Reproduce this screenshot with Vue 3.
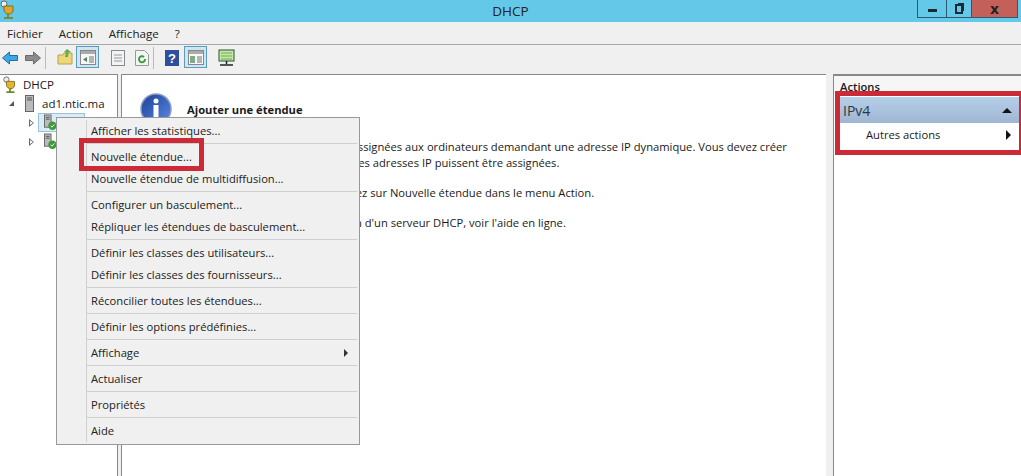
<script setup>
const menuGroups = [
  [{ t: 'Afficher les statistiques...' }],
  [{ t: 'Nouvelle étendue...', mark: true }, { t: 'Nouvelle étendue de multidiffusion...' }],
  [{ t: 'Configurer un basculement...' }, { t: 'Répliquer les étendues de basculement...' }],
  [{ t: 'Définir les classes des utilisateurs...' }, { t: 'Définir les classes des fournisseurs...' }],
  [{ t: 'Réconcilier toutes les étendues...' }],
  [{ t: 'Définir les options prédéfinies...' }],
  [{ t: 'Affichage', sub: true }],
  [{ t: 'Actualiser' }],
  [{ t: 'Propriétés' }],
  [{ t: 'Aide' }]
]
</script>

<template>
  <div class="win">
    <header class="title">
      <svg class="trophy" width="16" height="20" viewBox="0 0 16 20">
        <circle cx="4" cy="4" r="3" fill="#eee" stroke="#666" />
        <path d="M4 6h9v4c0 3-2 4-4 4s-5-1-5-4z" fill="#d9a92c" stroke="#8a6a1c" />
        <path d="M8 14v3M4 18h9" stroke="#7a8a40" stroke-width="2" />
      </svg>
      <span class="title-text">DHCP</span>
      <div class="winbtns">
        <div class="wb w1"><i class="min"></i></div>
        <div class="wb w2"><i class="max"></i></div>
        <div class="wb close">x</div>
      </div>
    </header>
    <nav class="menubar">
      <span>Fichier</span><span>Action</span><span>Affichage</span><span>?</span>
    </nav>
    <div class="toolbar">
      <svg width="16" height="14" viewBox="0 0 16 14" class="t-back"><path d="M.5 7l7-6v3.500h8v5h-8V13z" fill="#3fa8e2" stroke="#1f6e9e" /></svg>
      <svg width="16" height="14" viewBox="0 0 16 14" class="t-fwd"><path d="M15.500 7l-7-6v3.500h-8v5h8V13z" fill="#8c8c8c" stroke="#6a6a6a" /></svg>
      <i class="sep s1"></i>
      <svg width="16" height="16" viewBox="0 0 16 16" class="t-up"><path d="M1 6h5l1-2h8v11H1z" fill="#ecd77a" stroke="#b8a050" /><path d="M10 0l4 3-2.500.5L11 8H8l1-4.500L7 3z" fill="#5fb04a" /></svg>
      <div class="tb-on t-panel"><svg width="16" height="15" viewBox="0 0 16 15"><rect x=".5" y=".5" width="15" height="14" fill="#f8f8f8" stroke="#888" /><rect x="1" y="1" width="14" height="3" fill="#aaa" /><path d="M9 6h5v7H9z" fill="#b5b5b5" /><path d="M7 7v5L3 9.500z" fill="#4a8a5a" /></svg></div>
      <svg width="16" height="16" viewBox="0 0 16 16" class="t-list"><rect x="1.500" y=".5" width="13" height="15" fill="#f4f4f4" stroke="#8a8a8a" /><path d="M4 5h8M4 8h8M4 11h8" stroke="#8a9aa0" /></svg>
      <svg width="14" height="16" viewBox="0 0 14 16" class="t-ref"><path d="M.5.5h9l4 4v11H.5z" fill="#f4f4f4" stroke="#999" /><path d="M10 9a3 3 0 1 1-1-2" fill="none" stroke="#3e9a3e" stroke-width="2" /></svg>
      <i class="sep s2"></i>
      <svg width="14" height="16" viewBox="0 0 14 16" class="t-help"><rect width="14" height="16" fill="#2e4f9c" /><text x="7" y="13" text-anchor="middle" class="help-q">?</text></svg>
      <div class="tb-on t-panel2"><svg width="16" height="15" viewBox="0 0 16 15"><rect x=".5" y=".5" width="15" height="14" fill="#f8f8f8" stroke="#888" /><rect x="1" y="1" width="14" height="3" fill="#aaa" /><path d="M2 6h5v7H2z" fill="#4a8a5a" opacity=".7" /><path d="M9 6h5v7H9z" fill="#b5b5b5" /></svg></div>
      <svg width="17" height="18" viewBox="0 0 17 18" class="t-mon"><rect x="1" y="1" width="15" height="11" fill="#c9e8a8" stroke="#1e5a2a" /><path d="M3 4h11M3 7h11M3 10h11" stroke="#6aa85a" /><path d="M8.500 12v3M2 16h13" stroke="#222" stroke-width="1.500" /></svg>
    </div>
    <main class="body">
      <aside class="tree">
        <div class="node n0">
          <svg width="16" height="18" viewBox="0 0 16 20"><circle cx="4" cy="4" r="3" fill="#eee" stroke="#666" /><path d="M4 6h9v4c0 3-2 4-4 4s-5-1-5-4z" fill="#e2b62e" stroke="#8a6a1c" /><path d="M8 14v3M4 18h9" stroke="#6a8a30" stroke-width="2" /></svg>
          <span>DHCP</span>
        </div>
        <div class="node n1">
          <i class="tri-open"></i>
          <svg width="9" height="17" viewBox="0 0 9 17"><rect x=".5" y=".5" width="8" height="16" fill="#bbb" stroke="#666" /><path d="M2 3h5M2 5h5" stroke="#555" /></svg>
          <span>ad1.ntic.ma</span>
        </div>
        <div class="node n2">
          <i class="tri"></i>
          <div class="srv-box"><svg width="14" height="17" viewBox="0 0 14 17"><rect x=".5" y=".5" width="7" height="13" fill="#bbb" stroke="#666" /><path d="M2 3h4M2 5h4" stroke="#555" /><circle cx="9" cy="12" r="4.500" fill="#3c9a3c" /><path d="M7 12l1.500 1.500L11 10.500" stroke="#fff" fill="none" /></svg><span>IPv4</span></div>
        </div>
        <div class="node n2">
          <i class="tri"></i>
          <div class="srv-box plain"><svg width="14" height="17" viewBox="0 0 14 17"><rect x=".5" y=".5" width="7" height="13" fill="#bbb" stroke="#666" /><path d="M2 3h4M2 5h4" stroke="#555" /><circle cx="9" cy="12" r="4.500" fill="#3c9a3c" /><path d="M7 12l1.500 1.500L11 10.500" stroke="#fff" fill="none" /></svg><span>IPv6</span></div>
        </div>
      </aside>
      <section class="center">
        <div class="head">
          <svg width="32" height="32" viewBox="0 0 32 32" class="info">
            <defs>
              <linearGradient id="infoFill" x1="0" y1="0" x2="1" y2="1">
                <stop offset="0" stop-color="#1c3f9a" />
                <stop offset="1" stop-color="#5a8ce0" />
              </linearGradient>
            </defs>
            <circle cx="16" cy="16" r="15" fill="url(#infoFill)" stroke="#8a9ac0" stroke-width="1.500" />
            <circle cx="16" cy="8" r="2.500" fill="#fff" />
            <rect x="13.500" y="12" width="5" height="14" fill="#fff" />
          </svg>
          <h1>Ajouter une étendue</h1>
        </div>
        <div class="copy">
          <p>Des plages d'adresses IP y sont assignées aux ordinateurs demandant une adresse IP dynamique. Vous devez créer<br />et bâtir une étendue avant que des adresses IP puissent être assignées.</p>
          <p>Pour ajouter des étendues, cliquez sur Nouvelle étendue dans le menu Action.</p>
          <p>Pour les infos sur la configuration d'un serveur DHCP, voir l'aide en ligne.</p>
        </div>
      </section>
      <aside class="actions">
        <div class="act-head">Actions</div>
        <div class="act-mark">
          <div class="act-title"><span>IPv4</span><i class="up"></i></div>
          <div class="act-item"><span>Autres actions</span><i class="right"></i></div>
        </div>
      </aside>
    </main>
    <div class="ctx">
      <div v-for="(g, i) in menuGroups" :key="i" class="group">
        <div v-for="it in g" :key="it.t" class="item" :class="{ mark: it.mark }">
          <span>{{ it.t }}</span>
          <i v-if="it.sub" class="subarrow"></i>
        </div>
      </div>
    </div>
  </div>
</template>

<style scoped>
.win {
  width: 1021px;
  height: 476px;
  overflow: hidden;
  position: relative;
  background: #f0f0f0;
  font-family: "Open Sans", "Noto Sans", sans-serif;
  font-size: 11.2px;
  color: #1a1a1a;
  display: flex;
  flex-direction: column;
}
.title {
  height: 22px;
  background: #64c8e8;
  display: flex;
  justify-content: center;
  align-items: center;
  position: relative;
  flex: none;
}
.title-text { font-size: 13.500px; color: #222; }
.trophy { position: absolute; left: 0; top: 0; }
.winbtns {
  position: absolute;
  right: 3px;
  top: 0;
  display: flex;
  height: 18px;
}
.wb {
  box-sizing: border-box;
  border: 1px solid #2e5a70;
  border-top: 0;
  margin-left: -1px;
  display: flex;
  align-items: center;
  justify-content: center;
}
.w1 { width: 30px; }
.w2 { width: 26px; }
.wb.close {
  width: 47px;
  background: #c4605a;
  font: bold 14px "DejaVu Sans", sans-serif;
  line-height: 14px;
  color: #222;
}
.min { width: 9px; height: 3px; background: #1a2a30; margin-top: 4px; }
.max { width: 4px; height: 6px; border: 2px solid #1a2a30; box-shadow: 2px -2px 0 -1px #1a2a30; }
.menubar {
  height: 22px;
  flex: none;
  display: flex;
  align-items: center;
  gap: 16px;
  padding-left: 7px;
  border-bottom: 1px solid #a8a8a8;
  color: #222;
  font-size: 11.600px;
}
.toolbar {
  height: 28px;
  flex: none;
  position: relative;
}
.toolbar > * { position: absolute; }
.t-back { left: 2px; top: 6px; }
.t-fwd { left: 25px; top: 6px; }
.s1 { left: 45px; top: 2px; }
.t-up { left: 57px; top: 4px; }
.t-panel { left: 76px; top: 1px; }
.t-list { left: 110px; top: 5px; }
.t-ref { left: 135px; top: 5px; }
.s2 { left: 153px; top: 2px; }
.t-help { left: 165px; top: 5px; }
.t-panel2 { left: 184px; top: 1px; }
.t-mon { left: 218px; top: 4px; }
.sep { width: 1px; height: 22px; background: #bbb; }
.tb-on {
  width: 21px;
  height: 20px;
  background: #cde6f5;
  border: 1px solid #5a9cc0;
  display: flex;
  align-items: center;
  justify-content: center;
}
.help-q { font: bold 13px "Liberation Sans", sans-serif; fill: #fff; }
.body {
  flex: 1;
  display: flex;
  min-height: 0;
  padding-top: 1px;
}
.tree {
  width: 118px;
  box-sizing: border-box;
  background: #fff;
  border-top: 1px solid #888;
  border-right: 1px solid #888;
  flex: none;
}
.node {
  height: 19px;
  display: flex;
  align-items: center;
  gap: 5px;
  position: relative;
}
.n0 { padding-left: 2px; font-size: 11.500px; }
.n1 { padding-left: 9px; gap: 0; font-size: 11.500px; }
.n1 span { margin-left: 8px; }
.n2 { padding-left: 29px; gap: 4px; }
.tri-open {
  width: 0; height: 0;
  border-left: 5px solid transparent;
  border-bottom: 5px solid #555;
  margin-right: 11px;
}
.tri {
  width: 0; height: 0;
  border-top: 4px solid transparent;
  border-bottom: 4px solid transparent;
  border-left: 5px solid #666;
  position: relative;
}
.tri::after {
  content: "";
  position: absolute;
  left: -4px;
  top: -2px;
  border-top: 2px solid transparent;
  border-bottom: 2px solid transparent;
  border-left: 3px solid #fff;
}
.srv-box {
  width: 47px;
  height: 19px;
  box-sizing: border-box;
  background: #d8ecf8;
  border: 1px solid #9cc0d8;
  padding-left: 5px;
  display: flex;
  gap: 5px;
  line-height: 13px;
}
.srv-box.plain { background: none; border-color: transparent; }
.center {
  flex: 1;
  min-width: 0;
  overflow: hidden;
  margin-left: 3px;
  background: #fff;
  border-top: 1px solid #888;
  border-left: 1px solid #888;
  padding: 18px 0 0 18px;
}
.head { display: flex; align-items: flex-start; gap: 15px; }
.info { flex: none; }
h1 {
  margin: 0;
  margin-top: 9px;
  font-size: 11.200px;
  line-height: 16px;
  font-weight: 700;
}
.copy { margin: 14px 0 0 47px; line-height: 16px; white-space: nowrap; }
.copy p { margin: 0 0 14px; }
.actions {
  width: 188px;
  box-sizing: border-box;
  margin-left: 7px;
  flex: none;
  background: #fff;
  border-top: 2px solid #888;
  border-left: 1px solid #888;
}
.act-head {
  height: 15px;
  box-sizing: border-box;
  padding: 3px 0 0 6px;
  line-height: 16px;
  font-weight: 600;
  background: #f6f6f6;
  overflow: hidden;
}
.act-mark {
  height: 64px;
  margin-left: 1px;
  border: 5px solid #cc2a36;
  border-right-width: 2px;
  box-sizing: border-box;
  background: #fff;
  padding-top: 1px;
}
.act-title {
  height: 26px;
  background: linear-gradient(#b6cfe8, #9fb6d2);
  display: flex;
  align-items: center;
  justify-content: space-between;
  padding: 0 7px 0 3px;
  font-size: 14px;
  color: #2a3a44;
}
.up { border-left: 5px solid transparent; border-right: 5px solid transparent; border-bottom: 5px solid #111; }
.act-item {
  display: flex;
  justify-content: space-between;
  align-items: center;
  height: 23px;
  padding: 0 8px 0 26px;
}
.right { border-top: 5px solid transparent; border-bottom: 5px solid transparent; border-left: 5px solid #111; }
.ctx {
  position: absolute;
  left: 56px;
  top: 117px;
  width: 304px;
  height: 328px;
  box-sizing: border-box;
  background: #f0f0f0;
  border: 1px solid #999;
  padding: 2px;
}
.ctx::before {
  content: "";
  position: absolute;
  left: 29px;
  top: 2px;
  bottom: 2px;
  width: 1px;
  background: #d0d0d0;
}
.group { padding-bottom: 1px; margin-bottom: 2px; border-bottom: 1px solid #cfcfcf; margin-left: 28px; }
.group:last-child { border-bottom: 0; margin-bottom: 0; }
.item {
  height: 22px;
  line-height: 22px;
  padding-left: 4px;
  display: flex;
  justify-content: space-between;
  align-items: center;
  position: relative;
  color: #222;
}
.item.mark::after {
  content: "";
  position: absolute;
  left: -8px;
  top: -8px;
  box-sizing: border-box;
  width: 125px;
  height: 33px;
  border: 5px solid #cc2a36;
}
.subarrow {
  border-top: 4px solid transparent;
  border-bottom: 4px solid transparent;
  border-left: 4px solid #333;
  margin-right: 9px;
}
</style>
